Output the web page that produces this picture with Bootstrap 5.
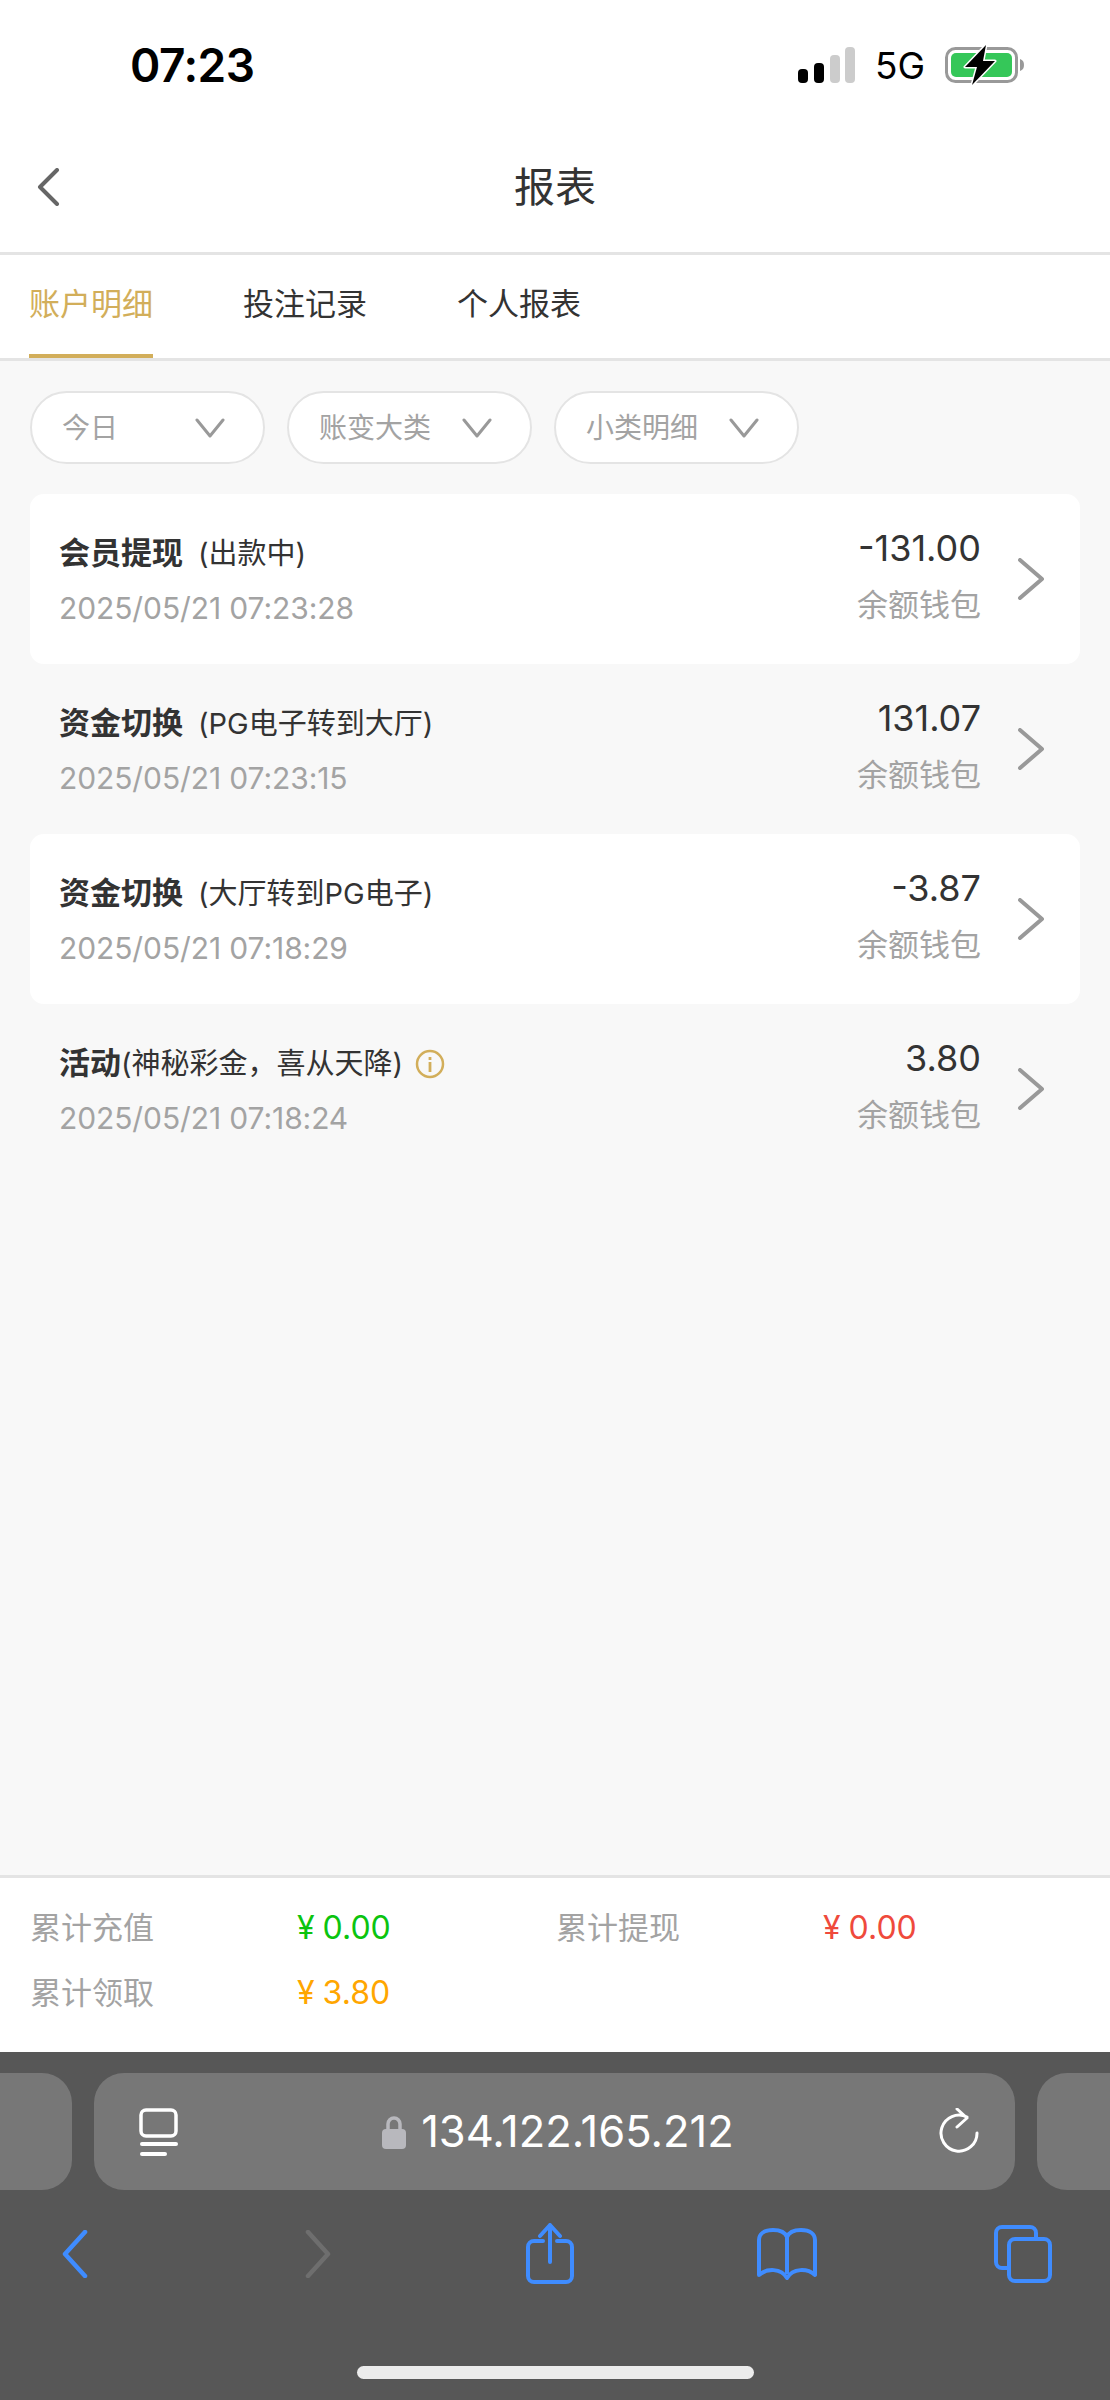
<!DOCTYPE html>
<html lang="zh">
<head>
  <meta charset="UTF-8">
  <meta name="viewport" content="width=device-width, initial-scale=1">
  <title>报表</title>
  <link href="https://cdn.jsdelivr.net/npm/bootstrap@5.3.3/dist/css/bootstrap.min.css" rel="stylesheet">
  <style>
    body {
      width: 1110px;
      height: 2400px;
      overflow: hidden;
      background-color: #f8f8f8;
      font-family: Inter, "Noto Sans CJK SC", sans-serif;
    }
    .shell { height: 2400px; }

    .status-bar { height: 100px; background: #fff; padding: 30px 85px 0 130px; }
    .status-time { font-size: 46px; font-weight: 600; color: #000; letter-spacing: -.5px; line-height: 1; }
    .status-net { font-size: 37px; color: #000; line-height: 1; margin: 0 20px; }

    .top-head { height: 155px; background: #fff; border-bottom: 3px solid #e4e4e4; padding: 22px 0 0 36px; position: relative; }
    .head-title { position: absolute; left: 0; right: 0; top: 58px; text-align: center; font-size: 41px; line-height: 58px; color: #333; }

    .tab-row { height: 106px; background: #fff; border-bottom: 3px solid #e4e4e4; padding-left: 29px; gap: 90px; }
    .tab-item { font-size: 31px; line-height: 40px; color: #333; padding-top: 29px; height: 103px; }
    .tab-item.on { color: #d2ae5a; border-bottom: 4px solid #d2ae5a; }

    .filter-row { padding: 30px 0 0 30px; gap: 22px; }
    .pick { height: 73px; border: 2px solid #e4e4e4; border-radius: 37px; background: #fff; color: #a3a3a3; font-size: 28px; padding: 0 38px 0 30px; }

    .log-list { padding: 30px 30px 0; }
    .log-row { height: 170px; padding: 37px 35px 0 29px; border-radius: 14px; }
    .log-row.lit { background: #fff; }
    .log-title { font-size: 29px; line-height: 44px; color: #333; }
    .log-title b { font-size: 31px; font-weight: 700; }
    .log-note { margin-left: 15px; }
    .log-time { font-size: 30px; line-height: 44px; color: #a3a3a3; margin-top: 10px; letter-spacing: -.1px; }
    .log-amt { font-size: 36px; line-height: 44px; color: #333; margin-top: -5px; }
    .log-wallet { font-size: 31px; line-height: 44px; color: #a3a3a3; margin-top: 13px; }
    .log-arrow { margin: 27px 0 0 36px; }
    .log-info { margin-left: 12px; }

    .sum-bar { height: 177px; background: #fff; border-top: 3px solid #e4e4e4; padding-top: 28px; padding-left: 30px; }
    .sum-line { height: 65px; }
    .sum-cell { width: 526px; }
    .sum-name { width: 267px; font-size: 31px; line-height: 44px; color: #a3a3a3; }
    .sum-val { font-size: 32px; line-height: 44px; }
    .yen { margin-right: 8px; }
    .c-in { color: #0bc40f; }
    .c-out { color: #ef4a3c; }
    .c-get { color: #ffa600; }

    .safari { height: 348px; background: #575757; padding-top: 21px; position: relative; }
    .url-strip { height: 117px; gap: 22px; }
    .url-side { width: 72px; background: #777; border-radius: 0 30px 30px 0; }
    .url-side.end { width: 73px; border-radius: 30px 0 0 30px; }
    .url-box { width: 921px; background: #777; border-radius: 30px; padding: 0 36px 0 45px; }
    .url-text { font-size: 43.5px; color: #fff; line-height: 1; margin-left: 15px; }
    .tool-row { height: 100px; margin-top: 14px; padding-left: 62px; }
    .t-fwd { margin-left: 217px; }
    .t-share { margin-left: 195px; }
    .t-book { margin-left: 183px; }
    .t-tabs { margin-left: 177px; }
    .home-bar { position: absolute; left: 357px; top: 314px; width: 397px; height: 13px; border-radius: 7px; background: #ececec; }
  </style>
</head>
<body>
<div class="shell d-flex flex-column">

  <!-- status bar -->
  <div class="status-bar d-flex justify-content-between align-items-center flex-shrink-0">
    <span class="status-time">07:23</span>
    <div class="d-flex align-items-center">
      <svg width="57" height="36" viewBox="0 0 57 36">
        <rect x="0" y="22" width="10" height="14" rx="4" fill="#000"/>
        <rect x="16" y="16" width="10" height="20" rx="4" fill="#000"/>
        <rect x="32" y="8" width="10" height="28" rx="4" fill="#ccc"/>
        <rect x="47" y="0" width="10" height="36" rx="4" fill="#ccc"/>
      </svg>
      <span class="status-net">5G</span>
      <svg width="80" height="40" viewBox="0 0 80 40">
        <rect x="1.5" y="3.5" width="70" height="33" rx="9" fill="none" stroke="#999" stroke-width="3"/>
        <rect x="6" y="8" width="61" height="24" rx="5" fill="#35c759"/>
        <path d="M75 14c3 1 4 3 4 6s-1 5-4 6z" fill="#999"/>
        <path d="M41 0 L20 22 H32 L27 40 L50 16 H38 Z" fill="#000" stroke="#fff" stroke-width="3" stroke-linejoin="round" paint-order="stroke"/>
      </svg>
    </div>
  </div>

  <!-- header -->
  <div class="top-head d-flex align-items-center flex-shrink-0">
    <svg width="24" height="38" viewBox="0 0 24 38"><path d="M21 2 L4 19 L21 36" fill="none" stroke="#666" stroke-width="4" stroke-linecap="round" stroke-linejoin="round"/></svg>
    <div class="head-title">报表</div>
  </div>

  <!-- tabs -->
  <div class="tab-row d-flex flex-shrink-0">
    <div class="tab-item on">账户明细</div>
    <div class="tab-item">投注记录</div>
    <div class="tab-item">个人报表</div>
  </div>

  <div class="flex-grow-1">
    <!-- filters -->
    <div class="filter-row d-flex">
      <div class="pick d-flex align-items-center justify-content-between" style="width: 235px">今日
        <svg width="30" height="20" viewBox="0 0 30 20"><path d="M2 2 L15 18 L28 2" fill="none" stroke="#999" stroke-width="3" stroke-linecap="round" stroke-linejoin="round"/></svg>
      </div>
      <div class="pick d-flex align-items-center justify-content-between" style="width: 245px">账变大类
        <svg width="30" height="20" viewBox="0 0 30 20"><path d="M2 2 L15 18 L28 2" fill="none" stroke="#999" stroke-width="3" stroke-linecap="round" stroke-linejoin="round"/></svg>
      </div>
      <div class="pick d-flex align-items-center justify-content-between" style="width: 245px">小类明细
        <svg width="30" height="20" viewBox="0 0 30 20"><path d="M2 2 L15 18 L28 2" fill="none" stroke="#999" stroke-width="3" stroke-linecap="round" stroke-linejoin="round"/></svg>
      </div>
    </div>

    <!-- records -->
    <div class="log-list">
      <div class="log-row lit d-flex">
        <div class="flex-grow-1">
          <div class="log-title"><b>会员提现</b><span class="log-note">(出款中)</span></div>
          <div class="log-time">2025/05/21 07:23:28</div>
        </div>
        <div class="text-end">
          <div class="log-amt">-131.00</div>
          <div class="log-wallet">余额钱包</div>
        </div>
        <svg class="log-arrow" width="28" height="42" viewBox="0 0 28 42"><path d="M3 2 L25 21 L3 40" fill="none" stroke="#999" stroke-width="4" stroke-linecap="round" stroke-linejoin="round"/></svg>
      </div>
      <div class="log-row d-flex">
        <div class="flex-grow-1">
          <div class="log-title"><b>资金切换</b><span class="log-note">(PG电子转到大厅)</span></div>
          <div class="log-time">2025/05/21 07:23:15</div>
        </div>
        <div class="text-end">
          <div class="log-amt">131.07</div>
          <div class="log-wallet">余额钱包</div>
        </div>
        <svg class="log-arrow" width="28" height="42" viewBox="0 0 28 42"><path d="M3 2 L25 21 L3 40" fill="none" stroke="#999" stroke-width="4" stroke-linecap="round" stroke-linejoin="round"/></svg>
      </div>
      <div class="log-row lit d-flex">
        <div class="flex-grow-1">
          <div class="log-title"><b>资金切换</b><span class="log-note">(大厅转到PG电子)</span></div>
          <div class="log-time">2025/05/21 07:18:29</div>
        </div>
        <div class="text-end">
          <div class="log-amt">-3.87</div>
          <div class="log-wallet">余额钱包</div>
        </div>
        <svg class="log-arrow" width="28" height="42" viewBox="0 0 28 42"><path d="M3 2 L25 21 L3 40" fill="none" stroke="#999" stroke-width="4" stroke-linecap="round" stroke-linejoin="round"/></svg>
      </div>
      <div class="log-row d-flex">
        <div class="flex-grow-1">
          <div class="log-title d-flex align-items-center"><span><b>活动</b>(神秘彩金，喜从天降)</span>
            <svg class="log-info" width="30" height="30" viewBox="0 0 30 30"><circle cx="15" cy="15" r="13" fill="none" stroke="#d2ae5a" stroke-width="2.5"/><rect x="13.6" y="13" width="2.8" height="10" fill="#d2ae5a"/><rect x="13.6" y="8" width="2.8" height="3" fill="#d2ae5a"/></svg>
          </div>
          <div class="log-time">2025/05/21 07:18:24</div>
        </div>
        <div class="text-end">
          <div class="log-amt">3.80</div>
          <div class="log-wallet">余额钱包</div>
        </div>
        <svg class="log-arrow" width="28" height="42" viewBox="0 0 28 42"><path d="M3 2 L25 21 L3 40" fill="none" stroke="#999" stroke-width="4" stroke-linecap="round" stroke-linejoin="round"/></svg>
      </div>
    </div>
  </div>

  <!-- totals -->
  <div class="sum-bar flex-shrink-0">
    <div class="sum-line d-flex">
      <div class="sum-cell d-flex"><span class="sum-name">累计充值</span><span class="sum-val c-in"><span class="yen">¥</span>0.00</span></div>
      <div class="sum-cell d-flex"><span class="sum-name">累计提现</span><span class="sum-val c-out"><span class="yen">¥</span>0.00</span></div>
    </div>
    <div class="sum-line d-flex">
      <div class="sum-cell d-flex"><span class="sum-name">累计领取</span><span class="sum-val c-get"><span class="yen">¥</span>3.80</span></div>
    </div>
  </div>

  <!-- browser chrome -->
  <div class="safari flex-shrink-0">
    <div class="url-strip d-flex">
      <div class="url-side"></div>
      <div class="url-box d-flex align-items-center justify-content-between">
        <svg width="40" height="48" viewBox="0 0 40 48">
          <rect x="2" y="2" width="35" height="26" rx="5" fill="none" stroke="#fff" stroke-width="3.5"/>
          <rect x="1" y="34" width="38" height="4" rx="2" fill="#fff"/>
          <rect x="1" y="44" width="27" height="4" rx="2" fill="#fff"/>
        </svg>
        <div class="d-flex align-items-center">
          <svg width="24" height="34" viewBox="0 0 24 34">
            <path d="M6 15V9a6 6 0 0 1 12 0v6" fill="none" stroke="#b8b8bd" stroke-width="3.5"/>
            <rect x="0" y="14" width="24" height="20" rx="4" fill="#b8b8bd"/>
          </svg>
          <span class="url-text">134.122.165.212</span>
        </div>
        <svg width="42" height="48" viewBox="0 0 42 48">
          <path d="M30 9 A18 18 0 1 0 40 25 M20 1 L30 10 L20 19" fill="none" stroke="#fff" stroke-width="3" stroke-linecap="round" stroke-linejoin="round"/>
        </svg>
      </div>
      <div class="url-side end"></div>
    </div>

    <div class="tool-row d-flex align-items-center">
      <svg width="26" height="48" viewBox="0 0 26 48"><path d="M23 2 L3 24 L23 46" fill="none" stroke="#3f8cff" stroke-width="4.5" stroke-linecap="round" stroke-linejoin="round"/></svg>
      <svg class="t-fwd" width="26" height="48" viewBox="0 0 26 48"><path d="M3 2 L23 24 L3 46" fill="none" stroke="#6e6e6e" stroke-width="4.5" stroke-linecap="round" stroke-linejoin="round"/></svg>
      <svg class="t-share" width="48" height="62" viewBox="0 0 48 62"><path d="M17 18H8a6 6 0 0 0-6 6v29a6 6 0 0 0 6 6h32a6 6 0 0 0 6-6V24a6 6 0 0 0-6-6h-9M24 39V2M14 13 L24 2 L34 13" fill="none" stroke="#3f8cff" stroke-width="4" stroke-linecap="round" stroke-linejoin="round"/></svg>
      <svg class="t-book" width="60" height="52" viewBox="0 0 60 52"><path d="M30 9C28 4 23 2 16 2C7 2 2 6 2 12V47C10 40 24 40 30 50C36 40 50 40 58 47V12C58 6 53 2 44 2C37 2 32 4 30 9ZM30 9V46" fill="none" stroke="#3f8cff" stroke-width="4" stroke-linejoin="round"/></svg>
      <svg class="t-tabs" width="58" height="58" viewBox="0 0 58 58"><path d="M14 43H8a6 6 0 0 1-6-6V8a6 6 0 0 1 6-6h28a6 6 0 0 1 6 6v6" fill="none" stroke="#3f8cff" stroke-width="4"/><rect x="15" y="14" width="41" height="42" rx="6" fill="none" stroke="#3f8cff" stroke-width="4"/></svg>
    </div>
    <div class="home-bar"></div>
  </div>

</div>
</body>
</html>
